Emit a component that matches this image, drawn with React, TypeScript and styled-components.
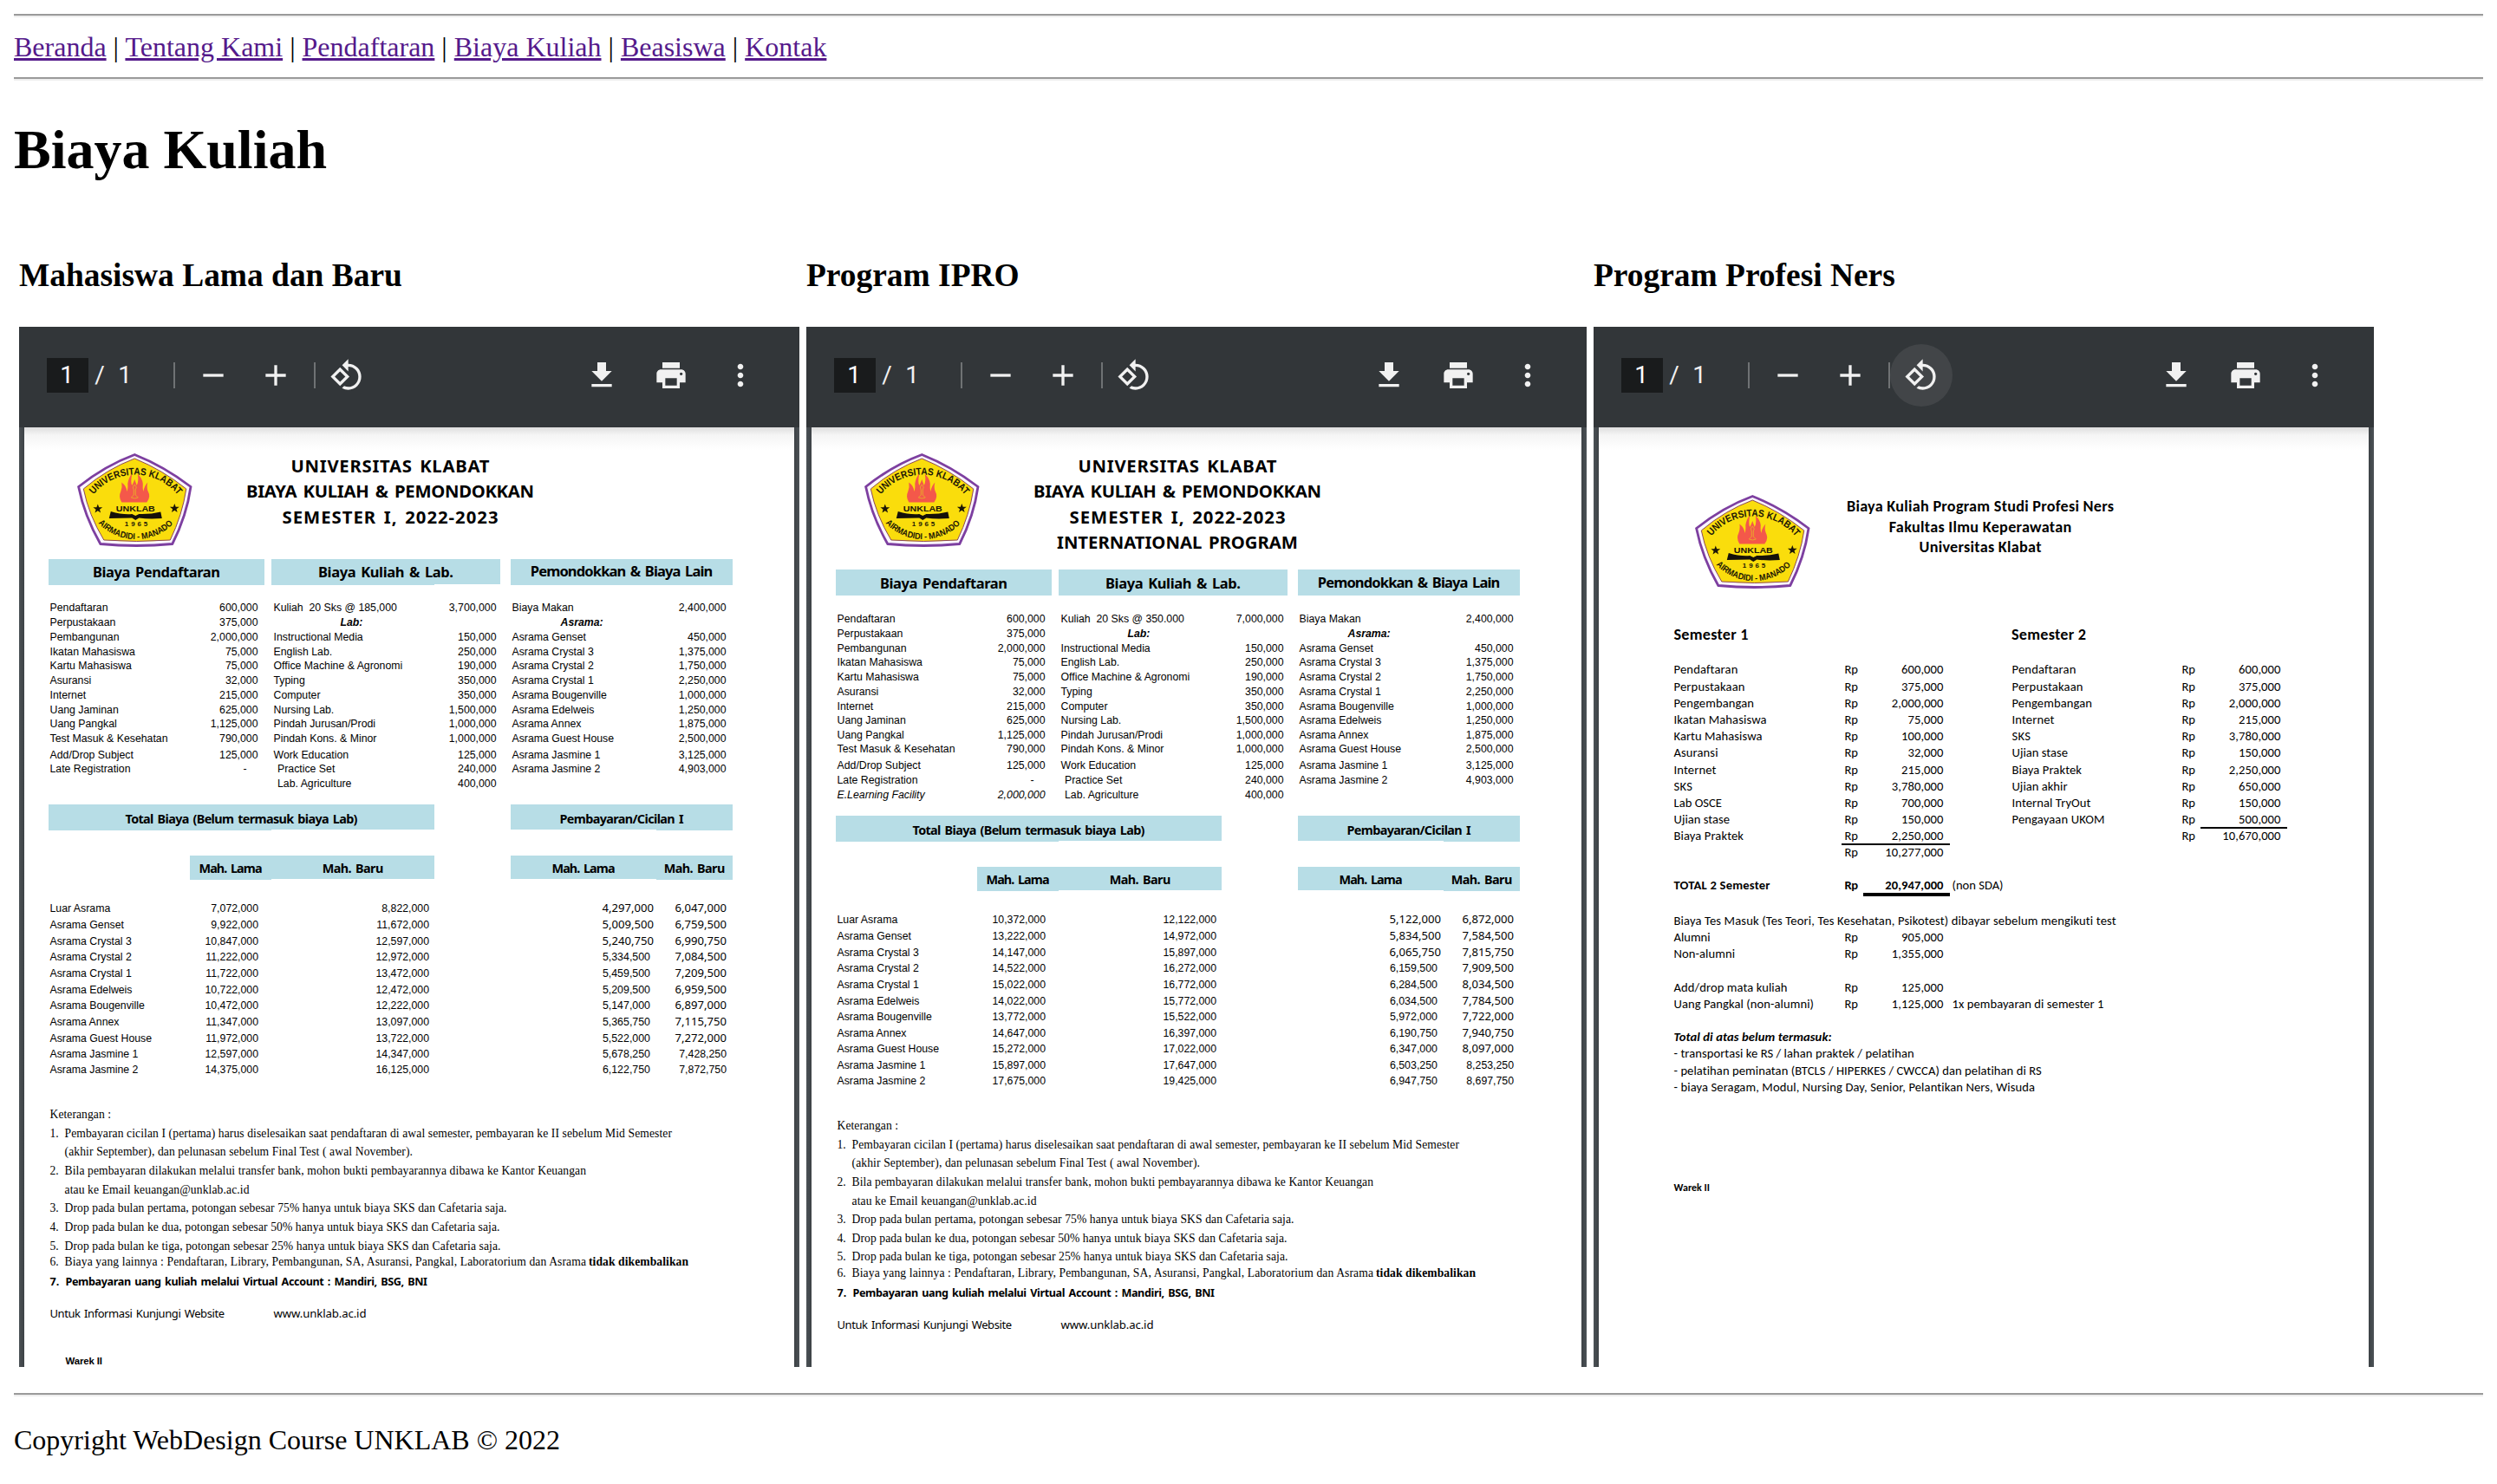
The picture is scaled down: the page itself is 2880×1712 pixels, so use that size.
import React, { useLayoutEffect, useRef, useState } from "react";
import styled, { createGlobalStyle, css } from "styled-components";

const SERIF = '"Liberation Serif", "Times New Roman", serif';
const ARIAL = '"Liberation Sans", Arial, sans-serif';
const COMIC = '"Comic Sans MS", "Noto Sans", sans-serif';
const CALIBRI = 'Calibri, Carlito, Lato, sans-serif';
const BAND = "#b7dde6";

const Global = createGlobalStyle`
  body { margin: 0 16px; background: #fff; color: #000; font: 32px/37px ${SERIF}; }
`;

/* ---------- page chrome ---------- */

const Divider = styled.hr<{ $top: number }>`
  border: 0;
  height: 2px;
  margin: ${(p) => p.$top}px 0 0;
  background: #9a9a9a;
  border-bottom: 2px solid #eee;
`;
const Nav = styled.nav`
  margin: 16px 0;
  height: 37px;
  white-space: pre;
`;
const NavLink = styled.a`
  color: #551a8b;
  text-decoration: underline;
`;
const Heading = styled.h1`
  margin: 43px 0 0;
  font-size: 64px;
  line-height: 73px;
`;
const Columns = styled.div`
  display: flex;
  gap: 8px;
  margin: 87px 0 0 6px;
`;
const Column = styled.section`
  width: 900px;
`;
const ColumnTitle = styled.h3`
  margin: 0 0 38px;
  font-size: 37.44px;
  line-height: 43px;
`;
const Footer = styled.footer`
  padding-top: 32px;
`;

/* ---------- PDF viewer ---------- */

const Viewer = styled.div`
  height: 1200px;
  overflow: hidden;
  background: linear-gradient(90deg, #4c5256, #3d4246 6px, #3d4246 894px, #4c5256);
`;
const Toolbar = styled.div`
  box-sizing: border-box;
  display: flex;
  align-items: center;
  height: 116px;
  padding: 0 32px 4px;
  background: #323639;
  color: #f1f1f1;
  font: 28px/40px Roboto, sans-serif;
`;
const PageInput = styled.span`
  box-sizing: border-box;
  width: 48px;
  height: 40px;
  padding-right: 2px;
  text-align: center;
  background: #191b1c;
  color: #fff;
`;
const PageText = styled.span<{ $w: number }>`
  width: ${(p) => p.$w}px;
  text-align: center;
`;
const Separator = styled.i<{ $l: number; $r: number }>`
  width: 2px;
  height: 30px;
  margin: 0 ${(p) => p.$r}px 0 ${(p) => p.$l}px;
  background: rgba(255, 255, 255, 0.3);
`;
const IconButton = styled.span<{ $hover?: boolean }>`
  display: flex;
  align-items: center;
  justify-content: center;
  width: 72px;
  height: 72px;
  border-radius: 50%;
  background: ${(p) => (p.$hover ? "rgba(255,255,255,.08)" : "none")};
`;
const RightTools = styled.div`
  display: flex;
  gap: 8px;
  margin-left: auto;
`;
const Sheet = styled.article`
  height: 1084px;
  margin: 0 6px;
  background: linear-gradient(#dedede, #f5f5f5 9px, #fff 26px);
  white-space: pre;
`;

/* ---------- document text ---------- */

/* A row whose bottom edge is the baseline of its text. */
const Row = styled.div<{ $h: number; $cols?: string; $gap?: number; $pad?: number }>`
  display: grid;
  grid-template-columns: 0 ${(p) => p.$cols ?? "auto"};
  justify-content: start;
  column-gap: ${(p) => p.$gap ?? 0}px;
  align-items: baseline;
  height: ${(p) => p.$h}px;
  padding-left: ${(p) => p.$pad ?? 29.5}px;
  line-height: 0;
  &::before {
    content: "";
    height: ${(p) => p.$h}px;
  }
`;
type Face = "arial" | "comic" | "serif" | "calibri";
const faces: Record<Face, string> = { arial: ARIAL, comic: COMIC, serif: SERIF, calibri: CALIBRI };

const Txt = styled.span<{ $face?: Face; $size?: number; $bold?: boolean; $italic?: boolean; $l?: number; $r?: number; $end?: boolean }>`
  font-family: ${(p) => faces[p.$face ?? "arial"]};
  font-size: ${(p) => p.$size ?? 12.3}px;
  font-weight: ${(p) => (p.$bold ? 700 : 400)};
  font-style: ${(p) => (p.$italic ? "italic" : "normal")};
  word-spacing: ${(p) => (p.$face === "comic" ? "0.12em" : "normal")};
  padding: 0 ${(p) => p.$r ?? 0}px 0 ${(p) => p.$l ?? 0}px;
  justify-self: ${(p) => (p.$end ? "end" : "start")};
  white-space: pre;
`;
const Pair = styled.div`
  display: flex;
  justify-content: space-between;
  align-items: baseline;
`;

type FitProps = { w: number; children: string; face?: Face; size?: number; bold?: boolean; italic?: boolean };

/* Tracks the text so that the line takes the width it has in the print layout. */
function Fit({ w, children, face, size, bold, italic }: FitProps) {
  const ref = useRef<HTMLSpanElement>(null);
  const [track, setTrack] = useState(0);
  useLayoutEffect(() => {
    const el = ref.current;
    if (el) setTrack((w - el.getBoundingClientRect().width) / (children.length - 1));
  }, []);
  return (
    <Txt $face={face} $size={size} $bold={bold} $italic={italic}>
      <span ref={ref} style={{ letterSpacing: track, marginRight: -track }}>
        {children}
      </span>
    </Txt>
  );
}

/* ---------- icons ---------- */

const Icon = ({ d }: { d: string }) => (
  <svg width="40" height="40" viewBox="0 0 24 24" fill="#f1f1f1">
    <path d={d} />
  </svg>
);
const icons = {
  minus: "M19 13H5v-2h14v2z",
  plus: "M19 13h-6v6h-2v-6H5v-2h6V5h2v6h6v2z",
  rotate:
    "M7.34 6.41L.86 12.9l6.49 6.48 6.49-6.48-6.5-6.49zM3.69 12.9l3.66-3.66L11 12.9l-3.66 3.66-3.65-3.66zm15.67-6.26C17.61 4.88 15.3 4 13 4V.76L8.76 5 13 9.24V6c1.79 0 3.58.68 4.95 2.05 2.73 2.73 2.73 7.17 0 9.9C16.58 19.32 14.79 20 13 20c-.97 0-1.94-.21-2.84-.61l-1.49 1.49C10.02 21.62 11.51 22 13 22c2.3 0 4.61-.88 6.36-2.64 3.52-3.51 3.52-9.21 0-12.72z",
  download: "M19 9h-4V3H9v6H5l7 7 7-7zM5 18v2h14v-2H5z",
  print:
    "M19 8H5c-1.66 0-3 1.34-3 3v6h4v4h12v-4h4v-6c0-1.66-1.34-3-3-3zm-3 11H8v-5h8v5zm3-7c-.55 0-1-.45-1-1s.45-1 1-1 1 .45 1 1-.45 1-1 1zm-1-9H6v4h12V3z",
  more: "M12 8c1.1 0 2-.9 2-2s-.9-2-2-2-2 .9-2 2 .9 2 2 2zm0 2c-1.1 0-2 .9-2 2s.9 2 2 2 2-.9 2-2-.9-2-2-2zm0 6c-1.1 0-2 .9-2 2s.9 2 2 2 2-.9 2-2-.9-2-2-2z",
};

function Crest({ id }: { id: string }) {
  const star = "M0-5.6L1.4-1.8 5.4-1.7 2.2.7 3.3 4.5 0 2.2-3.3 4.5-2.2.7-5.4-1.7-1.4-1.8z";
  const t = { fontFamily: ARIAL, fontWeight: 700, fill: "#1c1606" };
  return (
    <svg width="133" height="109" viewBox="-0.300 0 133 109">
      <path d="M66 1.5Q100 15 130.700 38.500Q126 72 109.500 104.500Q68 108.500 26.500 104.500Q8 72 1.300 38.500Q32 14 66 1.500z" fill="#fbf6ff" stroke="#7d3fa0" strokeWidth="2.800" />
      <path d="M66 6Q98 19 125.500 41Q121 71 107 100Q68 103 30.500 100Q13 71 7 41Q34 18 66 6z" fill="#fadd0c" stroke="#8d4a55" strokeWidth="1" />
      <path id={`${id}-top`} d="M18.500 47.500A62.500 62.500 0 0 1 115.500 48" fill="none" />
      <path id={`${id}-bottom`} d="M24 80.500A60 60 0 0 0 111.500 80" fill="none" />
      <text {...t} fontSize="11.500" textLength="111" lengthAdjust="spacingAndGlyphs">
        <textPath href={`#${id}-top`} textLength="111" lengthAdjust="spacingAndGlyphs">UNIVERSITAS KLABAT</textPath>
      </text>
      <text {...t} fontSize="10" textLength="96" lengthAdjust="spacingAndGlyphs">
        <textPath href={`#${id}-bottom`} textLength="96" lengthAdjust="spacingAndGlyphs">AIRMADIDI - MANADO</textPath>
      </text>
      <path
        d="M51 56.500Q47 50 50 44Q52 39 51 33.500Q57 38 57 44Q58.500 41 58 35Q59 28 63 23.500Q61 33 63 37Q65 33 66 30Q67 33 68.500 37Q71 32 69.500 24Q75 29 75.500 35Q75 40 76 44Q77 38 81 33.500Q79.500 40 81.500 44Q85 50 80 56.500z"
        fill="#f4584a"
      />
      <path d="M65 48V42Q62.500 39 66 36Q69.500 39 67 42V48L70 51Q66 53 62 51z" fill="none" stroke="#e9a52c" strokeWidth="1" />
      <text {...t} x="44.500" y="66.500" fontSize="8.500" textLength="45" lengthAdjust="spacingAndGlyphs">UNKLAB</text>
      <path d="M38.500 67Q52 71 63 70L67 72 71 70Q84 70.500 96 67.500L97.500 75Q82 76 71 74.500L67 77 63 74.500Q50 74.500 36.500 75z" fill="#15110a" />
      <text {...t} x="54.500" y="83.500" fontSize="8" textLength="26.500">1965</text>
      <path d={star} transform="translate(23.500 64)" fill="#1c1606" />
      <path d={star} transform="translate(112 63.500)" fill="#1c1606" />
    </svg>
  );
}

/* ---------- tuition sheets ---------- */

const SheetHead = styled.header<{ $h: number; $top?: number; $left?: number }>`
  box-sizing: border-box;
  display: flex;
  height: ${(p) => p.$h}px;
  padding: ${(p) => p.$top ?? 30}px 0 0 ${(p) => p.$left ?? 61}px;
`;
const Titles = styled.div<{ $gap: number; $w: number }>`
  width: ${(p) => p.$w}px;
  margin-left: ${(p) => p.$gap}px;
`;
const TitleRow = styled(Row)`
  padding: 0;
  justify-content: center;
`;
const Bands = styled.div<{ $top?: number }>`
  display: flex;
  margin-top: ${(p) => p.$top ?? 0}px;
  padding-left: 28px;
`;
const Band = styled.div<{ $w: number; $h: number; $base: number; $l?: number; $foot?: number; $side?: "left" | "right" }>`
  display: flex;
  justify-content: center;
  align-items: baseline;
  width: ${(p) => p.$w}px;
  height: ${(p) => p.$h}px;
  margin-left: ${(p) => p.$l ?? 0}px;
  line-height: 0;
  ${(p) =>
    p.$foot === undefined
      ? css`background: ${BAND};`
      : css`
          background:
            linear-gradient(${BAND}, ${BAND}) 0 0 / 100% calc(100% - 1px) no-repeat,
            linear-gradient(${BAND}, ${BAND}) ${p.$side ?? "left"} bottom / ${p.$foot}px 1px no-repeat;
        `}
  &::before {
    content: "";
    height: ${(p) => p.$base}px;
  }
`;

type Item = [string, string];
const fees1: Item[] = [
  ["Pendaftaran", "600,000"], ["Perpustakaan", "375,000"], ["Pembangunan", "2,000,000"],
  ["Ikatan Mahasiswa", "75,000"], ["Kartu Mahasiswa", "75,000"], ["Asuransi", "32,000"],
  ["Internet", "215,000"], ["Uang Jaminan", "625,000"], ["Uang Pangkal", "1,125,000"],
  ["Test Masuk & Kesehatan", "790,000"], ["Add/Drop Subject", "125,000"], ["Late Registration", "-"],
];
const labs: Item[] = [
  ["Lab:", ""], ["Instructional Media", "150,000"], ["English Lab.", "250,000"],
  ["Office Machine & Agronomi", "190,000"], ["Typing", "350,000"], ["Computer", "350,000"],
  ["Nursing Lab.", "1,500,000"], ["Pindah Jurusan/Prodi", "1,000,000"], ["Pindah Kons. & Minor", "1,000,000"],
  ["Work Education", "125,000"], ["Practice Set", "240,000"], ["Lab. Agriculture", "400,000"],
];
const dorms: Item[] = [
  ["Biaya Makan", "2,400,000"], ["Asrama:", ""], ["Asrama Genset", "450,000"],
  ["Asrama Crystal 3", "1,375,000"], ["Asrama Crystal 2", "1,750,000"], ["Asrama Crystal 1", "2,250,000"],
  ["Asrama Bougenville", "1,000,000"], ["Asrama Edelweis", "1,250,000"], ["Asrama Annex", "1,875,000"],
  ["Asrama Guest House", "2,500,000"], ["Asrama Jasmine 1", "3,125,000"], ["Asrama Jasmine 2", "4,903,000"],
];
const dormNames = [
  "Luar Asrama", "Asrama Genset", "Asrama Crystal 3", "Asrama Crystal 2", "Asrama Crystal 1", "Asrama Edelweis",
  "Asrama Bougenville", "Asrama Annex", "Asrama Guest House", "Asrama Jasmine 1", "Asrama Jasmine 2",
];

type SheetData = {
  id: string;
  headHeight: number;
  intl?: boolean;
  bandBase: number;
  sks: Item;
  feeSteps: number[];
  totalSteps: number[];
  noteSteps: number[];
  totals: string[];
};

const regular: SheetData = {
  id: "regular",
  headHeight: 152,
  bandBase: 21,
  sks: ["Kuliah  20 Sks @ 185,000", "3,700,000"],
  feeSteps: [30, 17, 17, 17, 16, 17, 17, 17, 16, 17, 19, 16, 17],
  totalSteps: [37, 19, 19, 18, 19, 19, 18, 19, 19, 18, 18],
  noteSteps: [52, 22, 21, 22, 22, 21, 22, 22, 18, 23, 37, 54],
  totals: [
    "7,072,000 8,822,000 4,297,000 6,047,000", "9,922,000 11,672,000 5,009,500 6,759,500",
    "10,847,000 12,597,000 5,240,750 6,990,750", "11,222,000 12,972,000 5,334,500 7,084,500",
    "11,722,000 13,472,000 5,459,500 7,209,500", "10,722,000 12,472,000 5,209,500 6,959,500",
    "10,472,000 12,222,000 5,147,000 6,897,000", "11,347,000 13,097,000 5,365,750 7,115,750",
    "11,972,000 13,722,000 5,522,000 7,272,000", "12,597,000 14,347,000 5,678,250 7,428,250",
    "14,375,000 16,125,000 6,122,750 7,872,750",
  ],
};
const ipro: SheetData = {
  id: "ipro",
  headHeight: 164,
  intl: true,
  bandBase: 22,
  sks: ["Kuliah  20 Sks @ 350.000", "7,000,000"],
  feeSteps: [31, 17, 17, 16, 17, 17, 17, 16, 17, 16, 19, 17, 17],
  totalSteps: [37, 19, 19, 18, 19, 19, 18, 19, 18, 19, 18],
  noteSteps: [52, 22, 21, 22, 22, 21, 22, 21, 19, 23, 37, 54],
  totals: [
    "10,372,000 12,122,000 5,122,000 6,872,000", "13,222,000 14,972,000 5,834,500 7,584,500",
    "14,147,000 15,897,000 6,065,750 7,815,750", "14,522,000 16,272,000 6,159,500 7,909,500",
    "15,022,000 16,772,000 6,284,500 8,034,500", "14,022,000 15,772,000 6,034,500 7,784,500",
    "13,772,000 15,522,000 5,972,000 7,722,000", "14,647,000 16,397,000 6,190,750 7,940,750",
    "15,272,000 17,022,000 6,347,000 8,097,000", "15,897,000 17,647,000 6,503,250 8,253,250",
    "17,675,000 19,425,000 6,947,750 8,697,750",
  ],
};

const notes: [string, string, number][] = [
  ["", "Keterangan :", 70.5],
  ["1.", "Pembayaran cicilan I (pertama) harus diselesaikan saat pendaftaran di awal semester, pembayaran ke II sebelum Mid Semester", 700.5],
  ["", "(akhir September), dan pelunasan sebelum Final Test ( awal November).", 401.5],
  ["2.", "Bila pembayaran dilakukan melalui transfer bank, mohon bukti pembayarannya dibawa ke Kantor Keuangan", 601.5],
  ["", "atau ke Email keuangan@unklab.ac.id", 213],
  ["3.", "Drop pada bulan pertama, potongan sebesar 75% hanya untuk biaya SKS dan Cafetaria saja.", 510],
  ["4.", "Drop pada bulan ke dua, potongan sebesar 50% hanya untuk biaya SKS dan Cafetaria saja.", 502],
  ["5.", "Drop pada bulan ke tiga, potongan sebesar 25% hanya untuk biaya SKS dan Cafetaria saja.", 503],
  ["6.", "Biaya yang lainnya : Pendaftaran, Library, Pembangunan, SA, Asuransi, Pangkal, Laboratorium dan Asrama", 601.5],
];

function FeeCell({ item, italic, indent }: { item?: Item; italic?: boolean; indent?: number }) {
  if (!item) return <Pair />;
  const [label, value] = item;
  if (!value)
    return (
      <Pair>
        <Txt $bold $italic $l={label === "Lab:" ? 77 : 56}>{label}</Txt>
      </Pair>
    );
  return (
    <Pair>
      <Txt $italic={italic} $l={indent}>{label}</Txt>
      <Txt $italic={italic} $r={value === "-" ? 13 : 0}>{value}</Txt>
    </Pair>
  );
}

function TuitionSheet({ data }: { data: SheetData }) {
  const left: Item[] = data.intl ? [...fees1, ["E.Learning Facility", "2,000,000"]] : fees1;
  const middle: Item[] = [data.sks, ...labs];
  const n = data.noteSteps;
  return (
    <Sheet>
      <SheetHead $h={data.headHeight}>
        <Crest id={data.id} />
        <Titles $gap={62} $w={332}>
          <TitleRow $h={22}><Fit w={229} face="comic" size={20.3} bold>UNIVERSITAS KLABAT</Fit></TitleRow>
          <TitleRow $h={29}><Fit w={332} face="comic" size={20.3} bold>BIAYA KULIAH & PEMONDOKKAN</Fit></TitleRow>
          <TitleRow $h={30}><Fit w={249} face="comic" size={20.3} bold>SEMESTER I, 2022-2023</Fit></TitleRow>
          {data.intl && (
            <TitleRow $h={29}><Fit w={278} face="comic" size={20.3} bold>INTERNATIONAL PROGRAM</Fit></TitleRow>
          )}
        </Titles>
      </SheetHead>
      <Bands>
        <Band $w={249} $h={30} $base={data.bandBase}><Fit w={147} face="comic" size={16.5} bold>Biaya Pendaftaran</Fit></Band>
        <Band $w={264} $h={30} $base={data.bandBase} $l={8} $foot={data.intl ? 264 : 188}><Fit w={156} face="comic" size={16.5} bold>Biaya Kuliah & Lab.</Fit></Band>
        <Band $w={256} $h={30} $base={data.bandBase - 1} $l={12}><Fit w={210.5} face="comic" size={16.5} bold>Pemondokkan & Biaya Lain</Fit></Band>
      </Bands>
      {data.feeSteps.map((h, i) => (
        <Row key={i} $h={h} $cols="240px 257px 247px" $gap={18} $pad={11.5}>
          <FeeCell item={left[i]} italic={i === 12} />
          <FeeCell item={middle[i]} indent={i > 10 ? 4.5 : 0} />
          <FeeCell item={dorms[i]} />
        </Row>
      ))}
      <Bands $top={20}>
        <Band $w={445} $h={30} $base={21.5} $foot={257}><Fit w={268} face="comic" size={14.4} bold>Total Biaya (Belum termasuk biaya Lab)</Fit></Band>
        <Band $w={256} $h={30} $base={21.5} $l={88} $foot={88} $side="right"><Fit w={143} face="comic" size={14.4} bold>Pembayaran/Cicilan I</Fit></Band>
      </Bands>
      <Bands $top={29}>
        <Band $w={94} $h={28} $base={20} $l={163}><Fit w={73} face="comic" size={14.4} bold>Mah. Lama</Fit></Band>
        <Band $w={188} $h={28} $base={20} $foot={0}><Fit w={70.5} face="comic" size={14.4} bold>Mah. Baru</Fit></Band>
        <Band $w={168} $h={28} $base={20} $l={88} $foot={0}><Fit w={73} face="comic" size={14.4} bold>Mah. Lama</Fit></Band>
        <Band $w={88} $h={28} $base={20}><Fit w={70.5} face="comic" size={14.4} bold>Mah. Baru</Fit></Band>
      </Bands>
      {data.totals.map((line, i) => {
        const [a, b, c, d] = line.split(" ");
        const wideC = i < 3;
        const wideD = i < 9;
        return (
          <Row key={i} $h={data.totalSteps[i]} $cols="140px 100.500px 197px 259px 84px">
            <Txt>{dormNames[i]}</Txt>
            <Txt $end>{a}</Txt>
            <Txt $end>{b}</Txt>
            <Txt $end $face={wideC ? "comic" : "arial"} $size={wideC ? 13.1 : 12.4} $r={wideC ? 0 : 4}>{c}</Txt>
            <Txt $end $face={wideD ? "comic" : "arial"} $size={wideD ? 13.1 : 12.3}>{d}</Txt>
          </Row>
        );
      })}
      {notes.map(([num, text, w], i) => (
        <Row key={i} $h={n[i]} $cols={i === 0 ? "auto" : "17px auto auto"}>
          {i > 0 && <Txt $face="serif" $size={13.6}>{num}</Txt>}
          <Fit w={w} face="serif" size={13.6}>{text}</Fit>
          {i === 8 && (
            <Txt $l={3}><Fit w={115} face="serif" size={13.6} bold>tidak dikembalikan</Fit></Txt>
          )}
        </Row>
      ))}
      <Row $h={n[9]} $cols="18px auto">
        <Txt $face="comic" $size={12.6} $bold>7.</Txt>
        <Fit w={417.5} face="comic" size={12.6} bold>Pembayaran uang kuliah melalui Virtual Account : Mandiri, BSG, BNI</Fit>
      </Row>
      <Row $h={n[10]} $cols="258px auto">
        <Fit w={201.5} face="comic" size={13}>Untuk Informasi Kunjungi Website</Fit>
        <Fit w={107} face="comic" size={13.2}>www.unklab.ac.id</Fit>
      </Row>
      {!data.intl && (
        <Row $h={n[11]} $pad={47.5}><Fit w={42.5} size={11.4} bold>Warek II</Fit></Row>
      )}
    </Sheet>
  );
}

/* ---------- nursing profession sheet ---------- */

const Rule = styled.div<{ $l: number; $w: number; $h?: number }>`
  width: ${(p) => p.$w}px;
  height: ${(p) => p.$h ?? 2}px;
  margin: 4px 0 ${(p) => -4 - (p.$h ?? 2)}px ${(p) => p.$l}px;
  background: #000;
`;
const NERS_COLS = "197px 114px 79px 196px 114px";

const sem1: Item[] = [
  ["Pendaftaran", "600,000"], ["Perpustakaan", "375,000"], ["Pengembangan", "2,000,000"],
  ["Ikatan Mahasiswa", "75,000"], ["Kartu Mahasiswa", "100,000"], ["Asuransi", "32,000"], ["Internet", "215,000"],
  ["SKS", "3,780,000"], ["Lab OSCE", "700,000"], ["Ujian stase", "150,000"], ["Biaya Praktek", "2,250,000"], ["", "10,277,000"],
];
const sem2: Item[] = [
  ["Pendaftaran", "600,000"], ["Perpustakaan", "375,000"], ["Pengembangan", "2,000,000"],
  ["Internet", "215,000"], ["SKS", "3,780,000"], ["Ujian stase", "150,000"], ["Biaya Praktek", "2,250,000"],
  ["Ujian akhir", "650,000"], ["Internal TryOut", "150,000"], ["Pengayaan UKOM", "500,000"], ["", "10,670,000"],
];
const nersSteps = [39, 20, 19, 19, 19, 19, 20, 19, 19, 19, 19, 19];
const labelWidths: Record<string, number> = {
  Pendaftaran: 73.5, Perpustakaan: 82, Pengembangan: 92.5, "Ikatan Mahasiswa": 107, "Kartu Mahasiswa": 102,
  Asuransi: 51, Internet: 49, SKS: 21.5, "Lab OSCE": 55.5, "Ujian stase": 64.5, "Biaya Praktek": 80.5,
  "Ujian akhir": 64, "Internal TryOut": 91, "Pengayaan UKOM": 107, Alumni: 42, "Non-alumni": 70.5,
  "Add/drop mata kuliah": 131, "Uang Pangkal (non-alumni)": 161.5, "TOTAL 2 Semester": 111,
};
const NERS = 14.6;
const NERS_TITLE = 18.2;

function NersLabel({ text, bold }: { text: string; bold?: boolean }) {
  return text ? <Fit w={labelWidths[text]} face="calibri" size={NERS} bold={bold}>{text}</Fit> : <span />;
}
function Rupiah({ value, bold }: { value: string; bold?: boolean }) {
  const digits = value.replace(/,/g, "").length;
  const commas = value.length - digits;
  return (
    <Pair>
      <Fit w={15.5} face="calibri" size={NERS} bold={bold}>Rp</Fit>
      <Fit w={digits * 7.5 + commas * 3.6} face="calibri" size={NERS} bold={bold}>{value}</Fit>
    </Pair>
  );
}

function NersRow({ h, label, value, bold, note, noteWidth }: { h: number; label: string; value: string; bold?: boolean; note?: string; noteWidth?: number }) {
  return (
    <Row $h={h} $cols="197px 114px auto" $pad={86.5}>
      <NersLabel text={label} bold={bold} />
      <Rupiah value={value} bold={bold} />
      {note && <Txt $l={10}><Fit w={noteWidth ?? 0} face="calibri" size={NERS}>{note}</Fit></Txt>}
    </Row>
  );
}

const exclusions: [number, string, number][] = [
  [19, "- transportasi ke RS / lahan praktek / pelatihan", 277],
  [20, "- pelatihan peminatan (BTCLS / HIPERKES / CWCCA) dan pelatihan di RS", 424],
  [19, "- biaya Seragam, Modul, Nursing Day, Senior, Pelantikan Ners, Wisuda", 416.5],
];

function NersSheet() {
  return (
    <Sheet>
      <SheetHead $h={200} $top={78} $left={111}>
        <Crest id="ners" />
        <Titles $gap={42} $w={308}>
          <TitleRow $h={19}><Fit w={308} face="calibri" size={NERS_TITLE} bold>Biaya Kuliah Program Studi Profesi Ners</Fit></TitleRow>
          <TitleRow $h={24}><Fit w={210.5} face="calibri" size={NERS_TITLE} bold>Fakultas Ilmu Keperawatan</Fit></TitleRow>
          <TitleRow $h={23}><Fit w={141} face="calibri" size={NERS_TITLE} bold>Universitas Klabat</Fit></TitleRow>
        </Titles>
      </SheetHead>
      <Row $h={45} $cols="389.500px auto" $pad={86.5}>
        <Fit w={86} face="calibri" size={NERS_TITLE} bold>Semester 1</Fit>
        <Fit w={86} face="calibri" size={NERS_TITLE} bold>Semester 2</Fit>
      </Row>
      {nersSteps.map((h, i) => (
        <React.Fragment key={i}>
          <Row $h={h} $cols={NERS_COLS} $pad={86.5}>
            <NersLabel text={sem1[i][0]} />
            <Rupiah value={sem1[i][1]} />
            <span />
            {sem2[i] && <NersLabel text={sem2[i][0]} />}
            {sem2[i] && <Rupiah value={sem2[i][1]} />}
          </Row>
          {i === 9 && <Rule $l={694} $w={100} />}
          {i === 10 && <Rule $l={280} $w={125} />}
        </React.Fragment>
      ))}
      <NersRow h={38} label="TOTAL 2 Semester" value="20,947,000" bold note="(non SDA)" noteWidth={59} />
      <Rule $l={305} $w={100} $h={4} />
      <Row $h={41} $pad={86.5}>
        <Fit w={510} face="calibri" size={NERS}>Biaya Tes Masuk (Tes Teori, Tes Kesehatan, Psikotest) dibayar sebelum mengikuti test</Fit>
      </Row>
      <NersRow h={19} label="Alumni" value="905,000" />
      <NersRow h={19} label="Non-alumni" value="1,355,000" />
      <NersRow h={39} label="Add/drop mata kuliah" value="125,000" />
      <NersRow h={19} label="Uang Pangkal (non-alumni)" value="1,125,000" note="1x pembayaran di semester 1" noteWidth={175} />
      <Row $h={38} $pad={86.5}>
        <Fit w={182} face="calibri" size={NERS} bold italic>Total di atas belum termasuk:</Fit>
      </Row>
      {exclusions.map(([h, text, w]) => (
        <Row key={text} $h={h} $pad={86.5}><Fit w={w} face="calibri" size={NERS}>{text}</Fit></Row>
      ))}
      <Row $h={115} $pad={86.5}><Fit w={41.5} face="calibri" size={12} bold>Warek II</Fit></Row>
    </Sheet>
  );
}

/* ---------- page ---------- */

function PdfToolbar({ hover }: { hover?: boolean }) {
  return (
    <Toolbar>
      <PageInput>1</PageInput>
      <PageText $w={26}>/</PageText>
      <PageText $w={32}>1</PageText>
      <Separator $l={40} $r={8} />
      <IconButton><Icon d={icons.minus} /></IconButton>
      <IconButton><Icon d={icons.plus} /></IconButton>
      <Separator $l={8} $r={0} />
      <IconButton $hover={hover}><Icon d={icons.rotate} /></IconButton>
      <RightTools>
        <IconButton><Icon d={icons.download} /></IconButton>
        <IconButton><Icon d={icons.print} /></IconButton>
        <IconButton><Icon d={icons.more} /></IconButton>
      </RightTools>
    </Toolbar>
  );
}

const links = ["Beranda", "Tentang Kami", "Pendaftaran", "Biaya Kuliah", "Beasiswa", "Kontak"];

export default function App() {
  return (
    <>
      <Global />
      <Divider $top={16} />
      <Nav>
        {links.map((l, i) => (
          <React.Fragment key={l}>
            {i > 0 && " | "}
            <NavLink href="#">{l}</NavLink>
          </React.Fragment>
        ))}
      </Nav>
      <Divider $top={0} />
      <Heading>Biaya Kuliah</Heading>
      <Columns>
        <Column>
          <ColumnTitle>Mahasiswa Lama dan Baru</ColumnTitle>
          <Viewer><PdfToolbar /><TuitionSheet data={regular} /></Viewer>
        </Column>
        <Column>
          <ColumnTitle>Program IPRO</ColumnTitle>
          <Viewer><PdfToolbar /><TuitionSheet data={ipro} /></Viewer>
        </Column>
        <Column>
          <ColumnTitle>Program Profesi Ners</ColumnTitle>
          <Viewer><PdfToolbar hover /><NersSheet /></Viewer>
        </Column>
      </Columns>
      <Divider $top={30} />
      <Footer>Copyright WebDesign Course UNKLAB © 2022</Footer>
    </>
  );
}
